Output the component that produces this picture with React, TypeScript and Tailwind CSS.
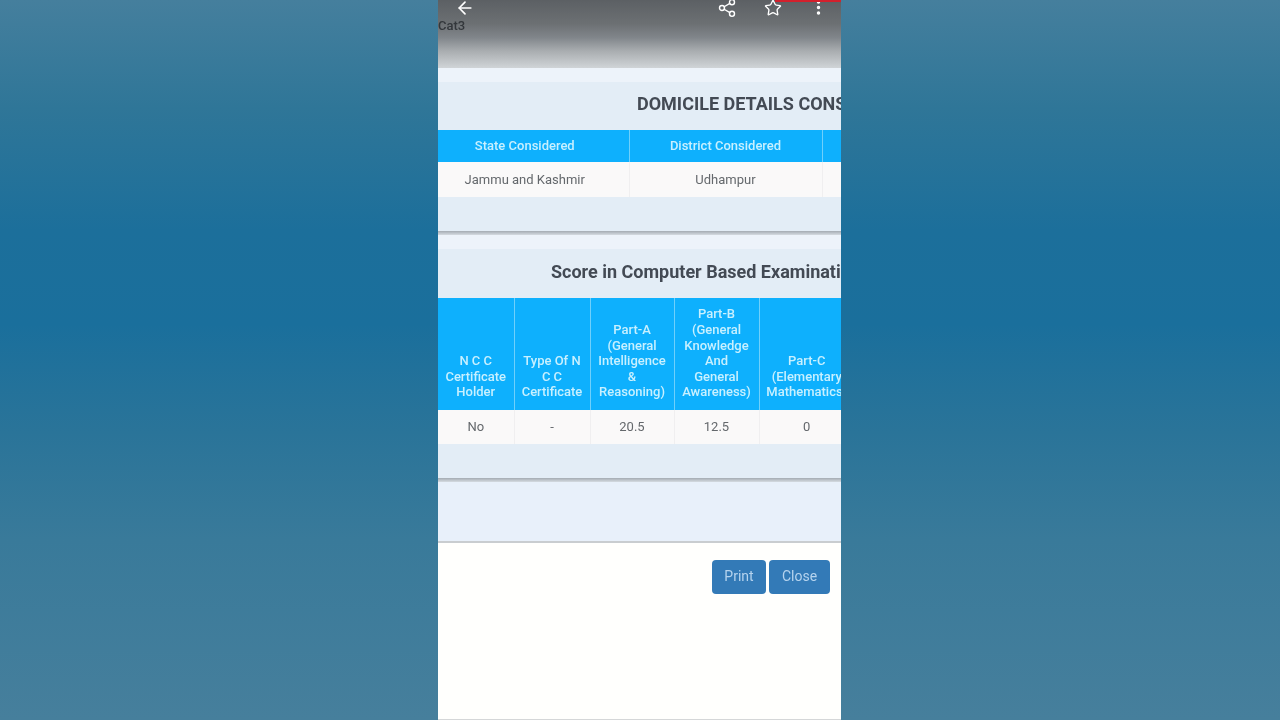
import { ArrowLeft, MoreVertical, Share2, Star } from "lucide-react";

const Topbar = () => (
  <div className="relative h-[68px] shrink-0 bg-[linear-gradient(180deg,#5c6064_0%,#6c7073_35%,#80858a_55%,#a9adb0_75%,#d0d4d7_100%)]">
    {/* Video progress */}
    <div className="absolute right-0 top-0 h-[2px] w-[66px] bg-[#d3202c]" />
    <div className="flex h-[15px] items-center pl-[17px] pr-[13px] text-white">
      <ArrowLeft className="h-[20px] w-[20px] shrink-0" strokeWidth={2} />
      <div className="ml-auto flex items-center">
        <Share2 className="h-[20px] w-[20px]" strokeWidth={1.7} />
        <Star className="ml-[27px] h-[18px] w-[18px]" strokeWidth={1.8} />
        <MoreVertical className="ml-[27px] h-[19px] w-[19px]" strokeWidth={2.4} />
      </div>
    </div>
    <p className="mt-[3px] text-[13px] font-medium leading-[16px] text-[#33373b]">Cat3</p>
  </div>
);

const Th = ({ w, children }: { w: string; children: React.ReactNode }) => (
  <th className={`${w} border-r border-[#6fd0fb] bg-[#0eb0fd] px-[4px] align-bottom text-[13px] font-medium leading-[15.6px] text-[#c8f0ff] last:border-r-0`}>
    {children}
  </th>
);

const Td = ({ children }: { children: React.ReactNode }) => (
  <td className="border-r border-[#f0eff0] bg-[#faf9f9] text-center align-middle text-[13px] leading-[16px] text-[#64686c] last:border-r-0">
    {children}
  </td>
);

const App = () => {
  return (
    <div className="h-[720px] w-[1280px] overflow-hidden bg-[linear-gradient(180deg,#457f9d_0%,#2f7698_15%,#1c6f9b_32%,#1a6f9c_45%,#2a7499_60%,#397a9a_75%,#467f9c_100%)]" style={{ fontFamily: "Roboto, 'Liberation Sans', sans-serif" }}>
      <div className="ml-[438px] flex h-full w-[403px] flex-col overflow-hidden bg-[#fffffd] blur-[0.5px]">
        <Topbar />

        <div className="h-[14px] shrink-0 bg-[#edf3fa]" />

        {/* Domicile */}
        <section className="h-[149px] shrink-0 overflow-hidden bg-[#e3edf6]">
          <h2 className="ml-[199px] flex h-[48px] items-center whitespace-nowrap pb-[5px] text-[18px] font-bold text-[#434a54]">
            DOMICILE DETAILS CONSIDERED
          </h2>
          <table className="ml-[-17px] w-[617px] table-fixed border-collapse">
            <thead>
              <tr className="h-[32px] [&>th]:align-middle">
                <Th w="w-[208px]">State Considered</Th>
                <Th w="w-[193px]">District Considered</Th>
                <Th w="w-[216px]">&nbsp;</Th>
              </tr>
            </thead>
            <tbody>
              <tr className="h-[35px]">
                <Td>Jammu and Kashmir</Td>
                <Td>Udhampur</Td>
                <Td>&nbsp;</Td>
              </tr>
            </tbody>
          </table>
        </section>
        <div className="h-[4px] shrink-0 bg-[linear-gradient(180deg,#a4abb2,#d5dbe1)]" />
        <div className="h-[14px] shrink-0 bg-[#edf3fa]" />

        {/* Score */}
        <section className="h-[229px] shrink-0 overflow-hidden bg-[#e3edf6]">
          <h2 className="ml-[113px] flex h-[49px] items-center whitespace-nowrap pb-[5px] text-[18px] font-bold text-[#434a54]">
            Score in Computer Based Examination
          </h2>
          <table className="w-[416px] table-fixed border-collapse">
            <thead>
              <tr className="h-[112px] [&>th]:pb-[10px]">
                <Th w="w-[76px]">N C C Certificate Holder</Th>
                <Th w="w-[76px]">Type Of N C C Certificate</Th>
                <Th w="w-[84px]">Part-A (General Intelligence<br />&amp;<br />Reasoning)</Th>
                <Th w="w-[85px]">Part-B (General Knowledge And<br />General Awareness)</Th>
                <Th w="w-[95px]">Part-C (Elementary Mathematics)</Th>
              </tr>
            </thead>
            <tbody>
              <tr className="h-[34px]">
                <Td>No</Td>
                <Td>-</Td>
                <Td>20.5</Td>
                <Td>12.5</Td>
                <Td>0</Td>
              </tr>
            </tbody>
          </table>
        </section>
        <div className="h-[4px] shrink-0 bg-[linear-gradient(180deg,#a4abb2,#d5dbe1)]" />
        <div className="h-[59px] shrink-0 bg-[#e8f0fa]" />
        <div className="h-[2px] shrink-0 bg-[#c9cdd0]" />

        {/* Actions */}
        <div className="flex justify-end gap-[3px] pr-[11px] pt-[17px]">
          <button className="h-[34px] w-[54px] rounded-[4px] bg-[#337ab7] pb-[2px] text-[14px] text-[#b5d3ee]">Print</button>
          <button className="h-[34px] w-[61px] rounded-[4px] bg-[#337ab7] pb-[2px] text-[14px] text-[#b5d3ee]">Close</button>
        </div>

        <div className="mt-auto h-[1px] shrink-0 bg-[#d5d7d8]" />
      </div>
    </div>
  );
};

export default App;
